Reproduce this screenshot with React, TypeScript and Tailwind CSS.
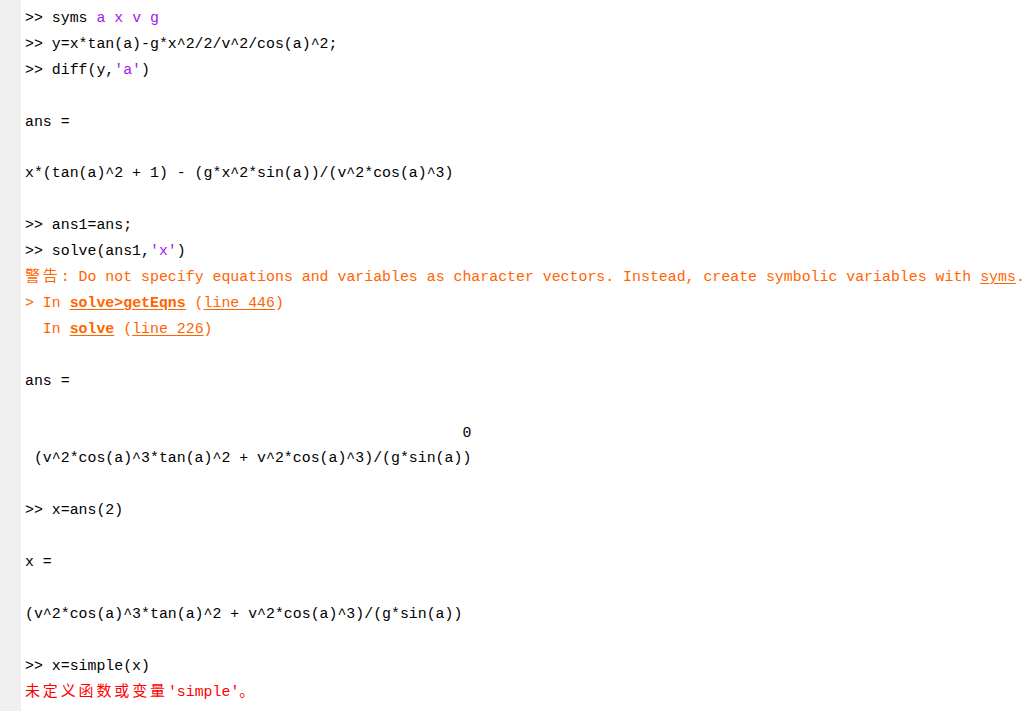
import React from "react";

const P = "text-[#a020f0]";
const W = "text-[#ff6400]";

function Cjk({ children }: { children: React.ReactNode }) {
  return (
    <span className="font-['Noto_Sans_CJK_SC',sans-serif] text-[15px] leading-none tracking-[2.86px]">{children}</span>
  );
}

function Line({ children, className = "" }: { children?: React.ReactNode; className?: string }) {
  return <div className={`h-[25.92px] leading-[25.92px] whitespace-pre ${className}`}>{children ?? " "}</div>;
}

export default function App() {
  return (
    <div className="flex min-h-screen w-full bg-white">
      <div className="w-[21px] shrink-0 bg-[#f0f0f0]" />
      <div className="flex-1 pl-[4px] pt-[6px] font-['Liberation_Mono',monospace] text-[14.88px] text-black">
        <Line>
          {">> syms "}
          <span className={P}>a x v g</span>
        </Line>
        <Line>{">> y=x*tan(a)-g*x^2/2/v^2/cos(a)^2;"}</Line>
        <Line>
          {">> diff(y,"}
          <span className={P}>'a'</span>
          {")"}
        </Line>
        <Line />
        <Line>ans =</Line>
        <Line />
        <Line>{"x*(tan(a)^2 + 1) - (g*x^2*sin(a))/(v^2*cos(a)^3)"}</Line>
        <Line />
        <Line>{">> ans1=ans;"}</Line>
        <Line>
          {">> solve(ans1,"}
          <span className={P}>'x'</span>
          {")"}
        </Line>
        <Line className={W}>
          <Cjk>警告</Cjk>
          {": Do not specify equations and variables as character vectors. Instead, create symbolic variables with "}
          <span className="underline underline-offset-2">syms</span>.
        </Line>
        <Line className={W}>
          {"> In "}
          <span className="font-bold underline underline-offset-2">solve&gt;getEqns</span>
          {" ("}
          <span className="underline underline-offset-2">line 446</span>
          {")"}
        </Line>
        <Line className={W}>
          {"  In "}
          <span className="font-bold underline underline-offset-2">solve</span>
          {" ("}
          <span className="underline underline-offset-2">line 226</span>
          {")"}
        </Line>
        <Line />
        <Line>ans =</Line>
        <Line />
        <Line>{" ".repeat(49) + "0"}</Line>
        <Line>{" (v^2*cos(a)^3*tan(a)^2 + v^2*cos(a)^3)/(g*sin(a))"}</Line>
        <Line />
        <Line>{">> x=ans(2)"}</Line>
        <Line />
        <Line>x =</Line>
        <Line />
        <Line>{"(v^2*cos(a)^3*tan(a)^2 + v^2*cos(a)^3)/(g*sin(a))"}</Line>
        <Line />
        <Line>{">> x=simple(x)"}</Line>
        <Line className="text-[#ff0000]">
          <Cjk>未定义函数或变量</Cjk>
          {"'simple'"}
          <Cjk>。</Cjk>
        </Line>
      </div>
    </div>
  );
}
